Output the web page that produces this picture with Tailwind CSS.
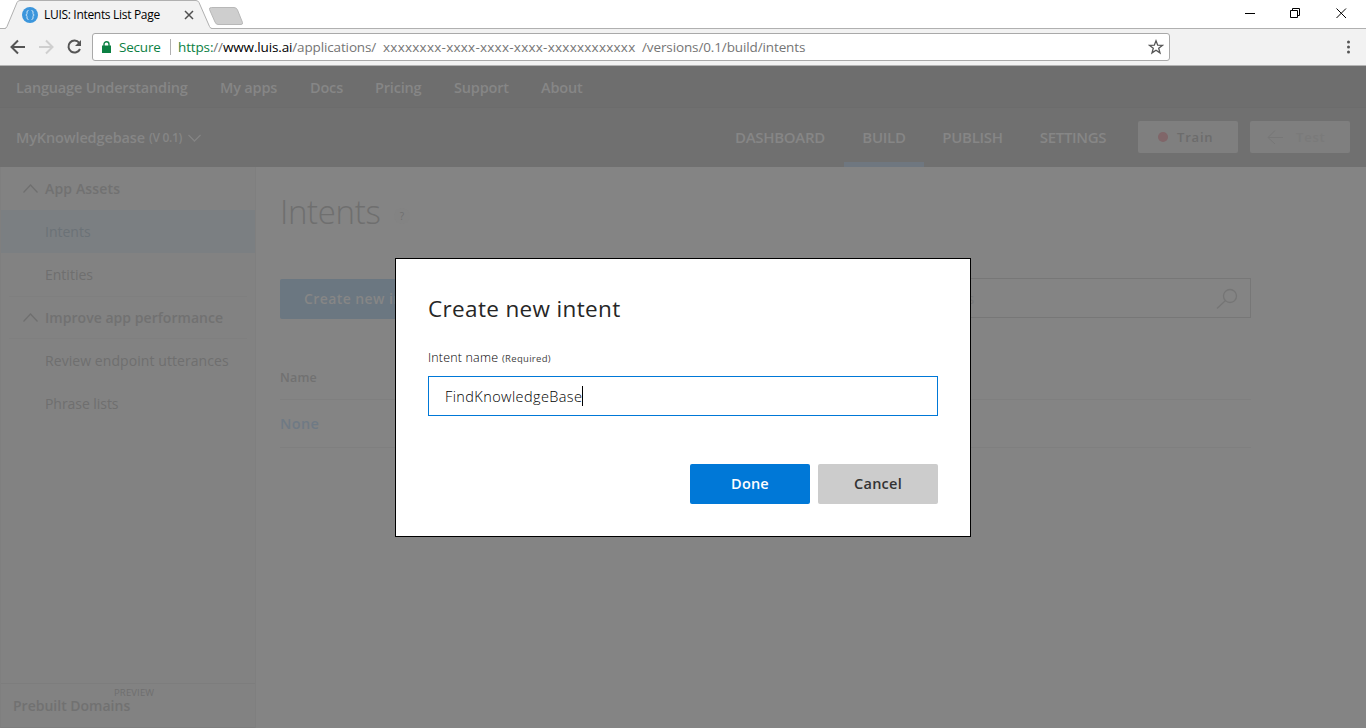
<!DOCTYPE html>
<html lang="en">
<head>
<meta charset="utf-8">
<title>LUIS: Intents List Page</title>
<script src="https://cdn.jsdelivr.net/npm/@tailwindcss/browser@4"></script>
</head>
<body class="relative flex h-[728px] w-[1366px] flex-col overflow-hidden bg-white font-['Open_Sans','Noto_Sans',sans-serif] whitespace-nowrap">

<!-- Browser tab strip -->
<div class="relative flex h-7 shrink-0 bg-white">
  <svg class="absolute inset-0" width="1366" height="29" viewBox="0 0 1366 29" fill="none">
    <path d="M5 29Q6.500 28 7 26.500L17 2.500Q18 .5 20 .5H196Q198 .5 199 2.500L209.500 26.500Q210.500 28.500 212 29Z" fill="#f2f2f2"/>
    <path d="M0 28.500H4.500Q6.200 28.500 7 26.500L17 2.500Q18 .5 20 .5H196Q198 .5 199 2.500L209.500 26.500Q210.500 28.500 212 28.500H1366" stroke="#b0b0b0"/>
    <path d="M211.500 7.500H234Q236.500 7.500 237.500 10L242.500 22.500Q243 24.500 241 24.500H218Q216 24.500 215 22L209.500 9.500Q209 7.500 211.500 7.500Z" fill="#cecece" stroke="#b8b8b8"/>
  </svg>
  <div class="relative flex h-7 w-[212px] items-center pt-0.5 pl-[22px]">
    <svg width="16" height="16" viewBox="0 0 16 16" fill="none"><circle cx="8" cy="8" r="8" fill="#3c96dc"/><path d="M6.500 3.500Q5 3.500 5 5V6.500Q5 8 3.800 8Q5 8 5 9.500V11Q5 12.500 6.500 12.500M9.500 3.500Q11 3.500 11 5V6.500Q11 8 12.200 8Q11 8 11 9.500V11Q11 12.500 9.500 12.500" stroke="#cfe6f8"/></svg>
    <span class="ml-[6px] w-[138px] text-[12px] leading-4 tracking-[-0.31px] text-black">LUIS: Intents List Page</span>
    <svg class="ml-0.5" width="10" height="10" viewBox="0 0 10 10" stroke="#505050" stroke-width="1.500"><path d="M1 1l8 8M9 1L1 9"/></svg>
  </div>
  <svg class="relative ml-auto" width="122" height="28" viewBox="0 0 122 28" fill="none" stroke="#000">
    <path d="M1 13.500h10M46.500 10.500h7v7h-7zM48.500 10.500v-2h7v7h-2M92.500 8.500l9.500 9.500M102 8.500L92.500 18"/>
  </svg>
</div>

<!-- Browser toolbar -->
<div class="flex h-[38px] shrink-0 items-center border-t border-b border-[#b4b4b4] bg-[#f2f2f2]">
  <svg class="shrink-0" width="92" height="36" viewBox="0 0 92 36" fill="none" stroke-width="2">
    <path d="M25 18H12M18 11.500L11.500 18l6.500 6.500" stroke="#555"/>
    <path d="M39 18h13M46 11.500l6.500 6.500l-6.500 6.500" stroke="#cfcfcf"/>
    <path d="M79.200 13.800A6 6 0 1 0 80 20" stroke="#555"/><path d="M81 11v6h-6z" fill="#555"/>
  </svg>
  <div class="flex h-7 w-[1078px] items-center rounded-[3px] border border-[#a9a9a9] bg-white text-[13.500px] leading-5">
    <svg class="ml-[9px]" width="9" height="12" viewBox="0 0 9 12" fill="none"><path d="M0 4.500h9V12H0z" fill="#0b8043"/><path d="M2 5V3.200a2.500 2.500 0 0 1 5 0V5" stroke="#0b8043" stroke-width="1.400"/></svg>
    <span class="ml-2 w-[51px] tracking-[-0.2px] text-[#0b8043]">Secure</span>
    <div class="h-4 w-px bg-[#b0b0b0]"></div>
    <span class="ml-[7px] w-[205px] tracking-[-0.14px] text-[#757575]"><span class="text-[#0b8043]">https:</span>//<span class="text-black">www.luis.ai</span>/applications/</span>
    <span class="w-[259px] tracking-[0.25px] text-[#757575]">xxxxxxxx-xxxx-xxxx-xxxx-xxxxxxxxxxxx</span>
    <span class="tracking-[-0.12px] text-[#757575]">/versions/0.1/build/intents</span>
    <svg class="mr-[5px] ml-auto" width="16" height="16" viewBox="0 0 16 16" fill="none" stroke="#555" stroke-width="1.300"><path d="M8 1.800l1.700 4.400 4.700.2-3.700 2.900 1.300 4.600L8 11.300l-4 2.600 1.300-4.600L1.600 6.400l4.700-.2z"/></svg>
  </div>
  <svg class="mr-4 ml-auto" width="4" height="14" viewBox="0 0 4 14" fill="#555"><circle cx="2.500" cy="2" r="1.500"/><circle cx="2.500" cy="7" r="1.500"/><circle cx="2.500" cy="12" r="1.500"/></svg>
</div>

<!-- Site navigation -->
<nav class="flex h-[42px] shrink-0 items-center border-b border-[#6c6c6c] bg-[#6e6e6e] pt-[3px] pl-4 text-[14.500px] leading-5 font-semibold tracking-[-0.18px] text-[#868686]">
  <span class="w-[204px]">Language Understanding</span>
  <span class="w-[90px]">My apps</span>
  <span class="w-[65px]">Docs</span>
  <span class="w-[79px]">Pricing</span>
  <span class="w-[87px]">Support</span>
  <span>About</span>
</nav>

<!-- Application bar -->
<div class="flex h-[59px] shrink-0 items-center bg-[#707070] pl-4 font-semibold text-[#868686]">
  <div class="flex w-[700px] items-center">
    <span class="w-[133px] text-[14.500px] tracking-[-0.13px]">MyKnowledgebase</span>
    <span class="w-[39px] text-[12px] tracking-[-0.3px]">(V 0.1)</span>
    <svg width="13" height="8" viewBox="0 0 13 8" fill="none" stroke="#848484" stroke-width="1.300"><path d="M.5 1l6 6 6-6"/></svg>
  </div>
  <div class="flex h-full text-center text-[15px] leading-[58px] tracking-[-0.3px]">
    <span class="w-32">DASHBOARD</span>
    <span class="w-20 border-b-[5px] border-[#6f7780]">BUILD</span>
    <span class="w-[97px]">PUBLISH</span>
    <span class="w-[104px]">SETTINGS</span>
  </div>
  <div class="mb-px ml-[13px] flex gap-3 text-[13px] tracking-[0.8px]">
    <div class="flex h-8 w-[100px] items-center rounded-[2px] bg-[#7f7f7f] pl-5 text-[#6c6c6c]"><span class="mr-[9px] size-[10px] rounded-full bg-[#806669]"></span><span class="pt-0.5">Train</span></div>
    <div class="flex h-8 w-[100px] items-center rounded-[2px] bg-[#7f7f7f] pl-[17px] text-[#7a7a7a]"><svg class="mr-[13px]" width="16" height="14" viewBox="0 0 16 14" fill="none" stroke="#777"><path d="M16 7.500H1M8 .5L1 7.500l7 6.500"/></svg><span class="pt-0.5">Test</span></div>
  </div>
</div>

<div class="flex min-h-0 flex-1 bg-[#848484]">
  <!-- Asset list -->
  <aside class="flex w-64 flex-col border-x border-[#7f7f7f] bg-[#828282] text-[14px] leading-5 text-[#6f6f6f]">
    <div class="flex h-[43px] items-center pl-[22px] font-semibold text-[#717171]"><svg class="mr-[7px]" width="15" height="9" viewBox="0 0 15 9" fill="none" stroke="#6f6f6f" stroke-width="1.200"><path d="M.5 8.500l7-7.500 7 7.500"/></svg><span class="tracking-[0.15px]">App Assets</span></div>
    <div class="flex h-[43px] items-center bg-[#7b7f82] pl-11 text-[#6b7277]"><span>Intents</span></div>
    <div class="flex h-[43px] items-center pl-11"><span>Entities</span></div>
    <div class="mx-2 flex h-[43px] items-center border-y border-[#7f7f7f] pl-[14px] font-semibold text-[#717171]"><svg class="mr-[7px]" width="15" height="9" viewBox="0 0 15 9" fill="none" stroke="#6f6f6f" stroke-width="1.200"><path d="M.5 8.500l7-7.500 7 7.500"/></svg><span class="tracking-[0.04px]">Improve app performance</span></div>
    <div class="flex h-[43px] items-center pl-11"><span class="tracking-[0.07px]">Review endpoint utterances</span></div>
    <div class="flex h-[43px] items-center pl-11"><span class="tracking-[-0.05px]">Phrase lists</span></div>
    <div class="mt-auto flex h-[45px] border-y border-[#7d7d7d] pl-3">
      <span class="mt-3 w-[101px] font-semibold text-[#717171]">Prebuilt Domains</span>
      <span class="mt-[3px] text-[9.500px] leading-3 tracking-[0.15px]">PREVIEW</span>
    </div>
  </aside>

  <!-- Intent list -->
  <main class="w-[995px] pt-[23px] pl-6">
    <div class="flex h-11 items-center text-[#6f6f6f]">
      <h1 class="w-[114px] text-[33px] leading-[44px] font-light tracking-[-0.35px]">Intents</h1>
      <span class="mt-2 size-4 rounded-full bg-[#838383] text-center text-[10px] leading-4">?</span>
    </div>
    <div class="mt-11 flex h-[41px] items-start justify-between">
      <div class="mt-px h-10 w-[170px] rounded-[2px] bg-[#6b7781] pl-6 text-[14px] leading-10 font-semibold tracking-[0.42px] text-[#868686]">Create new intent</div>
      <div class="flex h-10 w-[400px] items-center justify-between border border-[#777] pr-3 pl-[29px] text-[14px] text-[#787878]">
        <span>Search intents</span>
        <svg class="mt-0.5" width="22" height="22" viewBox="0 0 22 22" fill="none" stroke="#757575" stroke-width="1.300"><circle cx="14" cy="8" r="6.500"/><path d="M9.500 12.500L1 20.500"/></svg>
      </div>
    </div>
    <div class="mt-9 h-[45px] border-b border-[#7f7f7f] pt-[13px] text-[12.500px] leading-5 font-semibold tracking-[0.2px] text-[#717171]">Name</div>
    <div class="h-12 border-b border-[#7f7f7f] text-[14.500px] leading-[48px] font-semibold tracking-[0.4px] text-[#6f7a85]">None</div>
  </main>
</div>

<!-- Dialog over the page -->
<div class="absolute top-[258px] left-[395px] flex h-[279px] w-[576px] flex-col border border-black bg-white px-8 text-[#262626]">
  <h2 class="mt-[34px] text-[22.500px] leading-8 tracking-[0.35px]">Create new intent</h2>
  <div class="mt-[23px] flex h-5 items-baseline leading-5"><span class="w-[74px] text-[12.500px] font-light tracking-[0.17px] text-black">Intent name</span><span class="text-[9.500px] tracking-[0.3px] text-[#444]">(Required)</span></div>
  <div class="mt-2 flex h-10 shrink-0 items-center border border-[#0078d7] pl-4 text-[14.500px] leading-5"><span class="pt-px font-light tracking-[0.4px] text-black">FindKnowledgeBase</span><span class="h-5 w-px bg-black"></span></div>
  <div class="mt-12 flex justify-end gap-2 text-center text-[14.500px] leading-10 font-semibold tracking-[0.2px]">
    <div class="h-10 w-[120px] rounded-[2px] bg-[#0078d7] text-white">Done</div>
    <div class="h-10 w-[120px] rounded-[2px] bg-[#ccc] tracking-[0.25px] text-[#333]">Cancel</div>
  </div>
</div>
</body>
</html>
